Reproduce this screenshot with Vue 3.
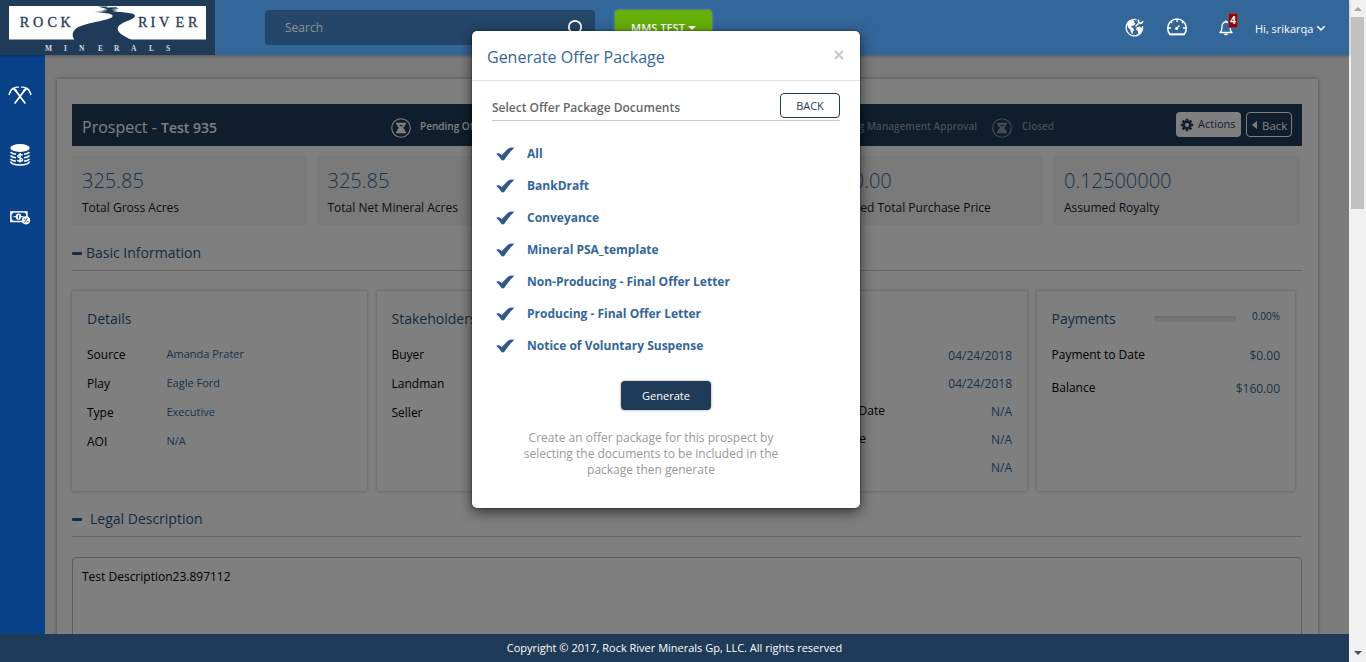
<script setup>
const stats = [
  { value: '325.85', label: 'Total Gross Acres' },
  { value: '325.85', label: 'Total Net Mineral Acres' },
  { value: '', label: '' },
  { value: '$160.00', label: 'Estimated Total Purchase Price' },
  { value: '0.12500000', label: 'Assumed Royalty' }
]
const details = [
  ['Source', 'Amanda Prater'],
  ['Play', 'Eagle Ford'],
  ['Type', 'Executive'],
  ['AOI', 'N/A']
]
const stakeholders = ['Buyer', 'Landman', 'Seller']
const dates = [
  ['', '04/24/2018'],
  ['', '04/24/2018'],
  ['Effective Date', 'N/A'],
  ['Close Date', 'N/A'],
  ['', 'N/A']
]
const documents = [
  'All',
  'BankDraft',
  'Conveyance',
  'Mineral PSA_template',
  'Non-Producing - Final Offer Letter',
  'Producing - Final Offer Letter',
  'Notice of Voluntary Suspense'
]
const statuses = [
  { text: 'Pending Offer', cls: 'current' },
  { text: 'Pending Management Approval', cls: 'approval' },
  { text: 'Closed', cls: 'closed' }
]
</script>

<template>
  <div class="screen">
    <div class="app">
      <header class="topbar">
        <div class="logo">
          <svg width="215" height="55" viewBox="0 0 215 55">
            <rect x="9" y="6" width="197" height="33.5" fill="#fff" />
            <path d="M98 6.4h10l-2 1.1 10-.3 3 1.2-8 .7 7 1-6 1c8 1.700 24 1 23 5.200-.8 3.700-14.500 5.700-17 10.700-2 4.500 4.500 9 14 12.900H74.500c-3-4.500-2.500-9.500 4-12.900 9-4.600 31.500-6.500 34-10.500 1.500-2.700-6-3.500-18-4.500l13-1.100-6-.7 6-1z" fill="#1f3b58" />
            <g class="logo-name">
              <text y="27.300" x="19.800 33 47.500 60.500">ROCK</text>
              <text y="27.300" x="138 150.500 159 175.500 188">RIVER</text>
            </g>
            <text class="logo-sub" y="51.300" x="45 64 79 98 114 131 149 166">MINERALS</text>
          </svg>
        </div>
        <div class="search">
          <span>Search</span>
          <svg width="22" height="24" viewBox="0 0 22 24"><circle cx="11" cy="11" r="6.200" fill="none" stroke="#fff" stroke-width="1.800" /><path d="M15.500 15.500l4 4" stroke="#fff" stroke-width="2" /></svg>
        </div>
        <button class="mms">MMS TEST<i class="caret"></i></button>
        <div class="tools">
          <svg class="globe" width="20" height="20" viewBox="0 0 20 20">
            <path d="M11.500 2.600A8.300 8.300 0 1 0 17.600 9" fill="none" stroke="#fff" stroke-width="1.200" />
            <path d="M2 7.500L5 4l3-1 1.500 1-.5 1.500 1.500 1L9 8.500l-2 .3L6 10l2 1 1.200 1.500L8 14.500l-.5 2.800-1.700-2.500-.3-2L3.500 11z" fill="#fff" />
            <path d="M11.500 10.500l3-1 2.500 1.500-.5 3-2 3-1.200-.3-.3-2.700-1.700-1z" fill="#fff" />
            <path d="M13.500 2a2.900 2.900 0 1 0 4.600 1.200l-1.700 2-1.900-.2-.2-1.900z" fill="#fff" />
            <path d="M13.500 6.500l-3 3" stroke="#fff" stroke-width="1.600" />
          </svg>
          <svg class="gauge" width="22" height="20" viewBox="0 0 22 20" fill="none" stroke="#fff">
            <path d="M4 17.500a9.300 9.300 0 1 1 14 0z" stroke-width="1.500" stroke-linejoin="round" />
            <path d="M11 2v3M4.600 4.600l1.500 1.500M17.400 4.600l-1.500 1.500M2 11h3M17 11h3M10.500 11.500l3-3" stroke-width="1.400" />
            <circle cx="10.600" cy="11.500" r="1.500" fill="#fff" stroke="none" />
            <path d="M3.500 17.300h15" stroke-width="1.800" />
          </svg>
          <div class="bell">
            <svg width="14" height="16" viewBox="0 0 14 16" fill="none" stroke="#fff" stroke-width="1.300">
              <path d="M1 12.500c2-1.500 2-3 2-6C3 3.500 4.500 2 7 2s4 1.500 4 4.500c0 3 0 4.500 2 6z" stroke-linejoin="round" />
              <path d="M7 2V.5M5.500 13.500c.3 1.500 2.700 1.500 3 0" />
            </svg>
            <b>4</b>
          </div>
          <span class="user">Hi, srikarqa</span>
          <svg class="chev" width="10" height="7" viewBox="0 0 10 7"><path d="M1.300 1.200l3.700 3.600 3.700-3.600" fill="none" stroke="#fff" stroke-width="1.600" /></svg>
        </div>
      </header>

      <div class="body">
        <nav class="side">
          <svg width="24" height="20" viewBox="0 0 24 20" fill="none" stroke="#fff">
            <path d="M6.700 18.500L16.800 5M17.300 18.500L7.200 5" stroke-width="1.700" />
            <path d="M5.500 3.200l3 3M18.500 3.200l-3 3" stroke-width="2.200" />
            <path d="M1 10C2 6.500 3.500 4 5.800 3 7.500 2.100 9 2 10.800 2.200M23 10c-1-3.500-2.500-6-4.800-7-1.700-.9-3.200-1-5-.8" stroke-width="1.400" />
          </svg>
          <svg width="22" height="24" viewBox="0 0 22 24" fill="none" stroke="#fff">
            <ellipse cx="11" cy="5" rx="9.700" ry="3.900" fill="#fff" stroke="none" />
            <path d="M1.500 9c1 1.300 3.200 2 5.500 2.300M1.500 12.500c1 1.300 3.200 2 5.500 2.300M1.500 16c1 1.300 3.200 2 5.500 2.300M20.500 9c-1 1.300-3.200 2-5.500 2.300M20.500 12.500c-1 1.300-3.200 2-5.500 2.300M20.500 16c-1 1.300-3.200 2-5.500 2.300M1.300 18.500c2 4.600 17.400 4.600 19.400 0" stroke-width="1.400" />
            <path d="M13.500 12.600c-.5-1.300-4.700-1.500-4.700.6 0 2.100 4.700 1.300 4.700 3.500 0 2.100-4.700 1.800-5 .2M11.200 10v9.600" stroke-width="1.500" />
          </svg>
          <svg width="22" height="16" viewBox="0 0 22 16">
            <rect x="1.900" y="2.900" width="16" height="9.600" fill="none" stroke="#fff" stroke-width="1.500" />
            <path d="M2 3h3L2 6zM2 12.500h3l-3-3zM18 3h-3l3 3z" fill="#fff" />
            <ellipse cx="9.500" cy="7.700" rx="2.700" ry="3.100" fill="#fff" />
            <path d="M4.500 7.700h10" stroke="#fff" /><path d="M9.500 6v3.500" stroke="#0a428a" stroke-width="1.200" />
            <circle cx="17" cy="11.300" r="4.100" fill="#fff" />
            <path d="M15.500 13.500l3-4.500M14.800 10.200h1.600M17.700 12.600h1.600" stroke="#0a428a" stroke-width=".9" />
          </svg>
        </nav>
        <main>
          <section class="panel">
            <div class="titlebar">
              <h1>Prospect - <b>Test 935</b></h1>
              <div v-for="s in statuses" :key="s.text" class="status" :class="s.cls">
                <svg width="20" height="20" viewBox="0 0 20 20">
                  <circle cx="10" cy="10" r="9.300" fill="none" stroke="currentColor" stroke-width="1.100" />
                  <path d="M5 4.800h10v1.800h-1c0 2-1.200 2.700-2 3.400.8.700 2 1.500 2 3.400h1v1.800H5v-1.800h1c0-1.900 1.200-2.700 2-3.400-.8-.7-2-1.400-2-3.400H5z" fill="currentColor" />
                  <path d="M8 6.900h4l-1 1.400H9z" class="sand" />
                </svg>
                <span>{{ s.text }}</span>
              </div>
              <button class="actions">
                <svg width="14" height="14" viewBox="0 0 14 14"><circle cx="7" cy="7" r="3.400" fill="none" stroke="#1f3b58" stroke-width="2.700" /><path d="M7 .8v2M7 11.200v2M.8 7h2M11.200 7h2M2.600 2.600L4 4M10 10l1.400 1.400M2.600 11.400L4 10M10 4l1.400-1.400" stroke="#1f3b58" stroke-width="2.500" /></svg>
                Actions
              </button>
              <button class="goback"><i></i>Back</button>
            </div>
            <div class="stats">
              <div v-for="(s, i) in stats" :key="i" class="stat"><strong>{{ s.value }}</strong><span>{{ s.label }}</span></div>
            </div>
            <h2><i></i>Basic Information</h2>
            <div class="cards">
              <div class="card details">
                <h3>Details</h3>
                <div v-for="d in details" :key="d[0]" class="row"><span>{{ d[0] }}</span><em>{{ d[1] }}</em></div>
              </div>
              <div class="card stake">
                <h3>Stakeholders</h3>
                <div v-for="s in stakeholders" :key="s" class="row"><span>{{ s }}</span></div>
              </div>
              <div class="card dates">
                <h3></h3>
                <div v-for="(d, i) in dates" :key="i" class="row"><span>{{ d[0] }}</span><em>{{ d[1] }}</em></div>
              </div>
              <div class="card pay">
                <h3>Payments<i></i><small>0.00%</small></h3>
                <div class="row"><span>Payment to Date</span><em>$0.00</em></div>
                <div class="row"><span>Balance</span><em>$160.00</em></div>
              </div>
            </div>
            <h2 class="legal"><i></i>Legal Description</h2>
            <div class="textarea">Test Description23.897112</div>
          </section>
          <div class="shade"></div>
        </main>
      </div>
      <footer>Copyright © 2017, Rock River Minerals Gp, LLC. All rights reserved</footer>
    </div>
    <div class="scroll">
      <i class="up"></i>
      <div class="thumb"></div>
      <i class="down"></i>
    </div>

    <div class="modal">
      <div class="modal-head"><span>Generate Offer Package</span>
        <svg width="10" height="10" viewBox="0 0 10 10"><path d="M1 1l8 8M9 1L1 9" stroke="#c8c8c8" stroke-width="2" /></svg>
      </div>
      <div class="select"><span>Select Offer Package Documents</span><button>BACK</button></div>
      <ul>
        <li v-for="d in documents" :key="d">
          <svg width="19" height="14" viewBox="0 0 19 14"><path d="M.3 7.300C1.500 5.800 3.600 6 5.700 8.200 9 5 11.500 1.500 14 .8c1.800-.5 3.500-.5 4.500-.2C14.500 4 11.500 8.500 8.300 12.800c-.7.900-2 .8-2.800.1C4 11 3 9 .3 7.300z" fill="#2d5a87" /></svg>
          {{ d }}
        </li>
      </ul>
      <button class="generate">Generate</button>
      <p>Create an offer package for this prospect by<br>selecting the documents to be included in the<br>package then generate</p>
    </div>
  </div>
</template>

<style>
html, body { margin: 0; overflow: hidden; }
</style>

<style scoped>
* { box-sizing: border-box; }
button { font: inherit; margin: 0; padding: 0; border: 0; }
h1, h2, h3, p, ul { margin: 0; padding: 0; font-weight: 400; }
em { font-style: normal; }
svg { flex: none; display: block; }
.screen { position: relative; display: flex; width: 1366px; height: 662px; overflow: hidden; font: 12px/20px "Open Sans", sans-serif; color: #000; }
.app { width: 1349px; display: flex; flex-direction: column; }

.topbar { position: relative; z-index: 2; flex: none; height: 55px; display: flex; background: #336699; box-shadow: 0 1px 3px rgba(0, 0, 0, .3); }
.logo { width: 215px; background: #1f3b58; }
.logo-name { font: 14.200px "Liberation Serif", serif; fill: #1f3b58; stroke: #1f3b58; stroke-width: .3; }
.logo-sub { font: bold 7.500px "Liberation Serif", serif; fill: #d3dae2; }
.search { width: 330px; height: 35px; margin: 10px 0 0 50px; padding: 0 9px 0 20px; border-radius: 4px; background: #244669; color: #8f9294; display: flex; justify-content: space-between; line-height: 35px; }
.search svg { margin-top: 6px; }
.mms { width: 97px; height: 35px; margin: 10px 0 0 20px; background: #66b008; border-radius: 4px; color: #fff; font-size: 11px; font-weight: 600; line-height: 35px; box-shadow: 0 0 3px rgba(190, 220, 160, .6); }
.caret { display: inline-block; margin-left: 3px; vertical-align: 2px; border: 4px solid transparent; border-top-color: #fff; border-bottom: 0; }
.tools { margin-left: auto; width: 224px; display: flex; color: #fff; }
.globe { margin-top: 17px; }
.gauge { margin: 17px 0 0 21px; }
.bell { position: relative; margin: 20px 0 0 31px; }
.bell b { position: absolute; left: 9px; top: -7px; width: 10px; height: 15px; background: #900; border: 1px solid #6b4a55; font-size: 10px; line-height: 13px; text-align: center; }
.user { margin: 19px 0 0 22px; width: 58px; font-size: 11px; white-space: nowrap; }
.chev { margin: 25px 0 0 3px; }

.body { flex: 1; min-height: 0; display: flex; }
.side { width: 45px; flex: none; background: #0a428a; display: flex; flex-direction: column; padding: 30px 0 0 8px; }
.side svg:nth-child(2) { margin: 38px 0 0 1px; }
.side svg:nth-child(3) { margin: 42px 0 0 1px; }
main { position: relative; flex: 1; background: #f6f6f6; padding: 24px 31px 0 12px; overflow: hidden; }
.shade { position: absolute; inset: 0; background: rgba(0, 0, 0, .5); }
.panel { width: 1261px; height: 700px; background: #fff; padding: 25px 16px 0 15px; box-shadow: 0 0 4px rgba(0, 0, 0, .35); }
.titlebar { display: flex; height: 42px; padding-left: 10px; background: #1f3b58; color: #fff; }
.titlebar h1 { width: 309px; font-size: 16px; line-height: 47px; }
.titlebar h1 b { font-size: 14px; font-weight: 600; }
.status { display: flex; color: #fff; font-size: 10px; font-weight: 600; line-height: 45px; white-space: nowrap; }
.status svg { margin: 14px 9px 0 0; }
.status .sand { fill: #1f3b58; }
.current { width: 400px; }
.approval { width: 201px; justify-content: flex-end; padding-right: 15px; color: #8c98a4; }
.approval svg { margin-left: -60px; }
.closed { color: #8c98a4; }
.closed svg { margin-right: 10px; }
.actions { display: flex; width: 65px; height: 25px; margin: 8px 5px 0 auto; padding: 0 0 0 4px; gap: 4px; background: #fff; border-radius: 4px; color: #1f3b58; font-size: 11px; line-height: 24px; }
.actions svg { margin-top: 6px; }
.goback { display: flex; width: 46px; height: 25px; margin: 8px 10px 0 0; border: 1px solid #fff; border-radius: 4px; background: none; color: #fff; font-size: 11.500px; line-height: 25px; }
.goback i { margin: 8px 5px 0 5px; border: 4px solid transparent; border-right: 5px solid #fff; border-left: 0; height: 8px; }

.stats { display: flex; gap: 12px; margin-top: 10px; width: 1228px; }
.stat { flex: 0 0 233.500px; height: 69px; padding: 12px 0 0 10px; background: #f4f4f4; display: flex; flex-direction: column; color: #1f3b58; white-space: nowrap; }
.stat:last-child { flex: 1; }
.stat strong { font-weight: 300; font-size: 20px; height: 24px; line-height: 25px; color: #336699; }
.stat span { margin-top: 6px; color: #0d1c2b; }
h2 { display: flex; align-items: center; height: 46px; padding-top: 11px; border-bottom: 1px solid #ccc; font-size: 14px; color: #2b567f; }
h2 i { width: 10px; height: 3px; margin-right: 4px; background: #2b567f; border-radius: 1px; }
.cards { display: flex; margin-top: 20px; gap: 9.500px; height: 200px; }
.card { padding: 18px 15px 0; box-shadow: 0 0 3px rgba(0, 0, 0, .3); background: #fff; white-space: nowrap; }
.card h3 { height: 20px; font-size: 14px; color: #2b567f; }
.row { display: flex; height: 20px; margin-bottom: 9px; }
h3 + .row { margin-top: 16px; }
.row em { color: #336699; }
.details { width: 295px; }
.details .row span { width: 79.500px; }
.details .row em { font-size: 11px; line-height: 18px; }
.stake { width: 296px; }
.dates { width: 345px; }
.dates .row { margin-bottom: 8px; }
.dates .row span { width: 188px; text-align: right; }
.dates .row:nth-child(5) span { padding-right: 19px; }
.dates .row em { margin-left: auto; line-height: 21px; }
.pay { width: 258.500px; }
.pay h3 { display: flex; }
.pay h3 i { width: 82px; height: 6px; margin: 7px 0 0 auto; border-radius: 3px; background: #ededed; box-shadow: inset 0 1px 2px rgba(0, 0, 0, .1); }
.pay h3 small { width: 44px; text-align: right; font-size: 10px; line-height: 15px; }
.pay .row { justify-content: space-between; margin-bottom: 13px; }
.pay .row em { line-height: 22px; }
.legal i { margin-right: 8px; }
.textarea { height: 140px; margin-top: 20px; padding: 9px; border: 1px solid #bbb; border-radius: 4px; }

footer { position: relative; flex: none; height: 28px; background: #1f3b58; color: #fff; text-align: center; font-size: 11px; line-height: 28px; }
.scroll { width: 17px; background: #f1f1f1; display: flex; flex-direction: column; align-items: center; }
.up { margin: 7px 0 6px; border: 4px solid transparent; border-top: 0; border-bottom-color: #a3a3a3; }
.thumb { width: 13px; height: 192px; background: #c1c1c1; }
.down { margin: auto 0 7px; border: 4px solid transparent; border-bottom: 0; border-top-color: #505050; }

.modal { position: absolute; z-index: 5; left: 472px; top: 31px; width: 388px; height: 477px; border-radius: 5px; background: #fff; box-shadow: 0 4px 14px rgba(0, 0, 0, .6), 0 0 2px rgba(0, 0, 0, .7); }
.modal-head { display: flex; justify-content: space-between; height: 50px; padding: 0 16px 0 15px; border-bottom: 1px solid #e0e0e0; font-size: 16px; line-height: 52px; color: #336699; }
.modal-head svg { margin-top: 19px; }
.select { display: flex; justify-content: space-between; height: 40px; margin: 0 20px; border-bottom: 1px solid #c8c8c8; color: #666; font-weight: 600; }
.select span { margin-top: 17px; }
.select button { width: 60px; height: 25px; margin-top: 12px; border: 1px solid #1f3b58; border-radius: 4px; background: #fff; color: #1f3b58; font-size: 11px; font-weight: 400; line-height: 24px; }
ul { list-style: none; padding: 17px 0 0 24px; }
li { display: flex; align-items: center; gap: 12px; height: 32px; color: #336699; font-weight: 700; }
.generate { display: block; width: 90px; height: 29px; margin: 19px 0 0 149px; border-radius: 4px; background: #1f3b58; color: #fff; font-size: 11px; font-weight: 500; box-shadow: 0 0 3px rgba(0, 0, 0, .4); }
p { margin: 20px 0 0 45px; width: 268px; text-align: center; line-height: 16px; color: #999; white-space: nowrap; }
</style>
